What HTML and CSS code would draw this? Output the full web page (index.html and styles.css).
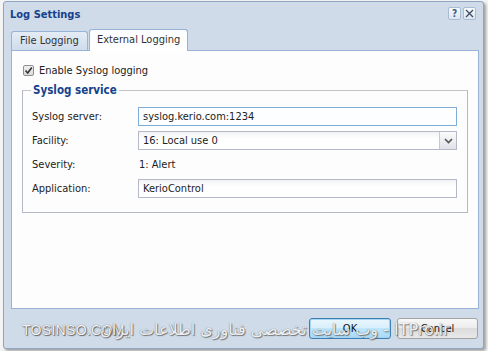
FILE: index.html
```html
<!DOCTYPE html>
<html>
<head>
<meta charset="utf-8">
<link rel="stylesheet" href="styles.css">
</head>
<body>
<div class="window">
  <div class="titlebar">
    <span class="title">Log Settings</span>
    <div class="tools">
      <span class="tool help">?</span>
      <span class="tool close"><svg width="9" height="9" viewBox="0 0 9 9"><path d="M1 1L8 8M8 1L1 8" stroke="#3c4a60" stroke-width="1.3"/></svg></span>
    </div>
  </div>
  <div class="tabs">
    <div class="tab">File Logging</div>
    <div class="tab active">External Logging</div>
  </div>
  <div class="panel">
    <label class="check"><span class="box"><svg width="9" height="9" viewBox="0 0 9 9"><path d="M1.5 4.5L3.7 7L7.8 1.5" fill="none" stroke="#333" stroke-width="1.6"/></svg></span>Enable Syslog logging</label>
    <fieldset class="group">
      <legend>Syslog service</legend>
      <div class="row"><span class="lbl">Syslog server:</span><div class="field focus">syslog.kerio.com:1234</div></div>
      <div class="row"><span class="lbl">Facility:</span><div class="field combo"><span>16: Local use 0</span><span class="trigger"><svg width="9" height="6" viewBox="0 0 9 6"><path d="M1 1L4.5 4.5L8 1" fill="none" stroke="#555" stroke-width="1.6"/></svg></span></div></div>
      <div class="row"><span class="lbl">Severity:</span><span class="val">1: Alert</span></div>
      <div class="row"><span class="lbl">Application:</span><div class="field">KerioControl</div></div>
    </fieldset>
  </div>
  <div class="footer">
    <div class="btn ok">OK</div>
    <div class="btn">Cancel</div>
  </div>
  <div class="wm-left">TOSINSO.COM</div>
  <div class="wm-right" dir="rtl">ITPro.ir - وب سایت تخصصی فناوری اطلاعات ایران</div>
</div>
</body>
</html>
```
FILE: styles.css
```css
html, body {
  margin: 0;
  padding: 0;
}
body {
  width: 488px;
  height: 351px;
  background: #f4f4f4;
  font-family: "DejaVu Sans Condensed", "Liberation Sans", Arial, sans-serif;
  font-size: 11px;
  color: #222;
  overflow: hidden;
}
.window {
  position: relative;
  box-sizing: border-box;
  margin: 1px 0 0 3px;
  width: 481px;
  height: 348px;
  background: #cfdbe9;
  border: 1px solid #8fa6c3;
  border-radius: 3px;
  box-shadow: 2px 2px 3px rgba(0,0,0,0.35);
  display: flex;
  flex-direction: column;
}
.titlebar {
  height: 26px;
  display: flex;
  align-items: center;
  justify-content: space-between;
  padding: 0 7px 0 6px;
}
.title {
  font-weight: bold;
  font-size: 11px;
  color: #15428b;
  margin-top: -2px;
}
.tools {
  display: flex;
  gap: 2px;
  margin-top: -4px;
}
.tool {
  width: 13px;
  height: 13px;
  box-sizing: border-box;
  border: 1px solid #a9bcd4;
  border-radius: 2px;
  background: linear-gradient(#f6f9fc, #dbe5f1);
  display: flex;
  align-items: center;
  justify-content: center;
  font-weight: bold;
  font-size: 10px;
  color: #3d5a86;
}
.tabs {
  display: flex;
  align-items: flex-end;
  padding-left: 7px;
  height: 22px;
  gap: 1px;
}
.tab {
  box-sizing: border-box;
  height: 19px;
  padding: 0 8px;
  line-height: 18px;
  border: 1px solid #97b3d6;
  border-bottom: none;
  border-radius: 3px 3px 0 0;
  background: linear-gradient(#e4ecf6, #cfdcec);
  color: #333;
}
.tab.active {
  height: 22px;
  padding: 0 7px;
  line-height: 20px;
  background: linear-gradient(#fafcfe, #ffffff);
  position: relative;
  top: 1px;
}
.panel {
  box-sizing: border-box;
  margin: 0 4px 0 7px;
  height: 259px;
  background: #fdfdfd;
  border: 1px solid #97b3d6;
  padding: 13px 10px 0 10px;
}
.check {
  display: flex;
  align-items: center;
  gap: 5px;
  height: 13px;
  padding-left: 1px;
}
.box {
  width: 11px;
  height: 11px;
  box-sizing: border-box;
  border: 1px solid #8e8f8f;
  border-radius: 2px;
  background: linear-gradient(#f0f0f0, #dcdcdc);
  display: flex;
  align-items: center;
  justify-content: center;
}
.group {
  margin: 6px 0 0 0;
  border: 1px solid #b5b8c8;
  border-top-color: #c5c5c5;
  padding: 4px 10px 14px 9px;
}
.group legend {
  font-weight: bold;
  font-size: 11.5px;
  color: #15428b;
  padding: 0 2px;
  margin-left: -1px;
}
.row {
  display: flex;
  align-items: center;
  height: 19px;
  margin-top: 5px;
}
.row:first-of-type { margin-top: 6px; }
.lbl {
  width: 106px;
  flex: none;
}
.val {
  padding-left: 1px;
}
.field {
  flex: 1;
  box-sizing: border-box;
  height: 19px;
  border: 1px solid #b5b8c8;
  background: linear-gradient(#f2f2f2, #ffffff 40%);
  padding: 0 4px;
  line-height: 17px;
  display: flex;
  align-items: center;
}
.field.focus {
  border-color: #7eadd9;
  background: #fdfeff;
}
.field.combo {
  padding-right: 0;
  justify-content: space-between;
}
.trigger {
  width: 17px;
  height: 17px;
  box-sizing: border-box;
  border-left: 1px solid #c5c9d3;
  background: linear-gradient(#fafafa, #dfe2e8);
  display: flex;
  align-items: center;
  justify-content: center;
}
.footer {
  display: flex;
  justify-content: flex-end;
  gap: 6px;
  padding: 9px 5px 0 0;
}
.btn {
  box-sizing: border-box;
  width: 81px;
  height: 21px;
  border: 1px solid #a3a3a3;
  border-radius: 3px;
  background: linear-gradient(#f8f8f8 0%, #ececec 45%, #dcdcdc 50%, #e8e8e8 100%);
  text-align: center;
  line-height: 19px;
  color: #111;
}
.btn.ok {
  width: 82px;
  border-color: #3c7fb1;
  box-shadow: inset 0 0 0 1px #a6d4f2;
  background: linear-gradient(#eaf6fd 0%, #d9f0fc 45%, #bee6fd 50%, #a7d9f5 100%);
}
.wm-left, .wm-right {
  position: absolute;
  font-family: "DejaVu Sans", sans-serif;
  color: #f4f4f4;
  text-shadow: 0 0 1px #555, 1px 1px 1px #666;
  white-space: nowrap;
  pointer-events: none;
}
.wm-left {
  left: 18px;
  top: 320px;
  font-family: "Liberation Sans", sans-serif;
  font-size: 14px;
  letter-spacing: 0.3px;
}
.wm-right {
  left: 96px;
  top: 318px;
  font-size: 16px;
  opacity: 0.85;
}
```
